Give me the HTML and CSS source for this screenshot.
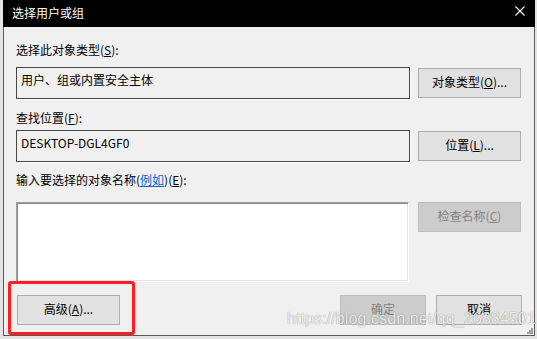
FILE: index.html
```html
<!DOCTYPE html>
<html lang="zh-CN">
<head>
<meta charset="utf-8">
<title>选择用户或组</title>
<link rel="stylesheet" href="styles.css">
</head>
<body>
<div class="desk">
  <div class="window">
    <div class="titlebar">
      <span class="title">选择用户或组</span>
      <svg class="close" width="10" height="10" viewBox="0 0 10 10"><path d="M0.5 0.5 L9.5 9.5 M9.5 0.5 L0.5 9.5" stroke="#fff" stroke-width="1.1" fill="none"/></svg>
    </div>
    <div class="content">
      <div class="label">选择此对象类型(<u>S</u>):</div>
      <div class="row r1">
        <div class="field">用户、组或内置安全主体</div>
        <button class="btn">对象类型(<u>O</u>)...</button>
      </div>
      <div class="label l2">查找位置(<u>F</u>):</div>
      <div class="row r2">
        <div class="field">DESKTOP-DGL4GF0</div>
        <button class="btn">位置(<u>L</u>)...</button>
      </div>
      <div class="label l3">输入要选择的对象名称(<a class="link">例如</a>)(<u>E</u>):</div>
      <div class="row r3">
        <div class="textarea"></div>
        <button class="btn disabled">检查名称(<u>C</u>)</button>
      </div>
      <div class="footer">
        <button class="btn adv">高级(<u>A</u>)...</button>
        <div class="spacer"></div>
        <button class="btn disabled small">确定</button>
        <button class="btn small">取消</button>
      </div>
    </div>
    <svg class="grip" width="7" height="7" viewBox="0 0 7 7"><g fill="#a0a0a0"><rect x="5" y="1" width="2" height="2"/><rect x="3" y="3" width="2" height="2"/><rect x="5" y="3" width="2" height="2"/><rect x="1" y="5" width="2" height="2"/><rect x="3" y="5" width="2" height="2"/><rect x="5" y="5" width="2" height="2"/></g></svg>
  </div>
  <div class="highlight"></div>
  <div class="watermark">https://blog.csdn.net/qq_26884501</div>
</div>
</body>
</html>
```
FILE: styles.css
```css
html, body {
  margin: 0;
  padding: 0;
}
body {
  width: 537px;
  height: 339px;
  overflow: hidden;
  background: #e4e4e4;
  font-family: "Noto Sans CJK SC", "Noto Sans", sans-serif;
  font-size: 12px;
  color: #000;
}
.desk {
  position: relative;
  width: 537px;
  height: 339px;
  padding-left: 3px;
  box-sizing: border-box;
}
.window {
  position: relative;
  width: 532px;
  height: 336px;
  box-sizing: border-box;
  background: #f0f0f0;
  border-left: 1px solid #5a5a5a;
  border-right: 1px solid #5a5a5a;
  border-bottom: 1px solid #5a5a5a;
}
.titlebar {
  height: 27px;
  background: #000;
  margin: 0 -1px;
  display: flex;
  align-items: center;
  padding: 0 0 2px 9px;
  box-sizing: border-box;
  position: relative;
}
.title {
  color: #fff;
  font-size: 12px;
  line-height: 16px;
}
.close {
  position: absolute;
  right: 10px;
  top: 6px;
}
.content {
  padding: 15px 12px 0 12px;
}
.label {
  line-height: 16px;
  height: 16px;
  white-space: nowrap;
}
.l2 { margin-top: 11px; }
.l3 { margin-top: 10px; }
.link {
  color: #0066cc;
  text-decoration: underline;
}
.row {
  display: grid;
  grid-template-columns: 394px 103px;
  column-gap: 8px;
  align-items: center;
}
.r1 { margin-top: 9px; }
.r2 { margin-top: 4px; }
.r3 { margin-top: 14px; align-items: start; }
.field {
  height: 32px;
  box-sizing: border-box;
  border: 1px solid #464646;
  box-shadow: 1px 1px 0 #fff;
  padding: 4px 0 0 4px;
  line-height: 16px;
  background: #f0f0f0;
  white-space: nowrap;
}
.textarea {
  height: 80px;
  box-sizing: border-box;
  background: #fff;
  border-top: 1px solid #a0a0a0;
  border-left: 1px solid #a0a0a0;
  border-right: 1px solid #fff;
  border-bottom: 1px solid #fff;
  box-shadow: inset 1px 1px 0 #8a8a8a, inset -1px -1px 0 #e3e3e3;
  width: 393px;
}
.btn {
  height: 30px;
  box-sizing: border-box;
  border: 1px solid #adadad;
  background: #e1e1e1;
  font-family: inherit;
  font-size: 12px;
  line-height: 16px;
  color: #000;
  padding: 0 0 2px 0;
  margin: 0;
  white-space: nowrap;
}
.btn.disabled {
  background: #cccccc;
  border-color: #bfbfbf;
  color: #838383;
}
.footer {
  margin-top: 13px;
  display: flex;
  align-items: center;
  gap: 10px;
}
.footer .adv {
  width: 103px;
  margin-left: 1px;
}
.spacer { flex: 1; }
.footer .small { width: 86px; }
.grip {
  position: absolute;
  right: 1px;
  bottom: 1px;
}
.highlight {
  position: absolute;
  left: 8px;
  top: 281px;
  width: 127px;
  height: 54px;
  box-sizing: border-box;
  border: 3px solid #ff1f1f;
  border-radius: 3px;
}
.watermark {
  position: absolute;
  left: 287px;
  top: 309px;
  font-family: "Liberation Sans", Arial, sans-serif;
  font-size: 16px;
  line-height: 20px;
  color: rgba(255, 255, 255, 0.85);
  text-shadow: 0 0 1px rgba(0, 0, 0, 0.35), 0 0 1px rgba(0, 0, 0, 0.2);
  white-space: nowrap;
  letter-spacing: 0.1px;
}
```
